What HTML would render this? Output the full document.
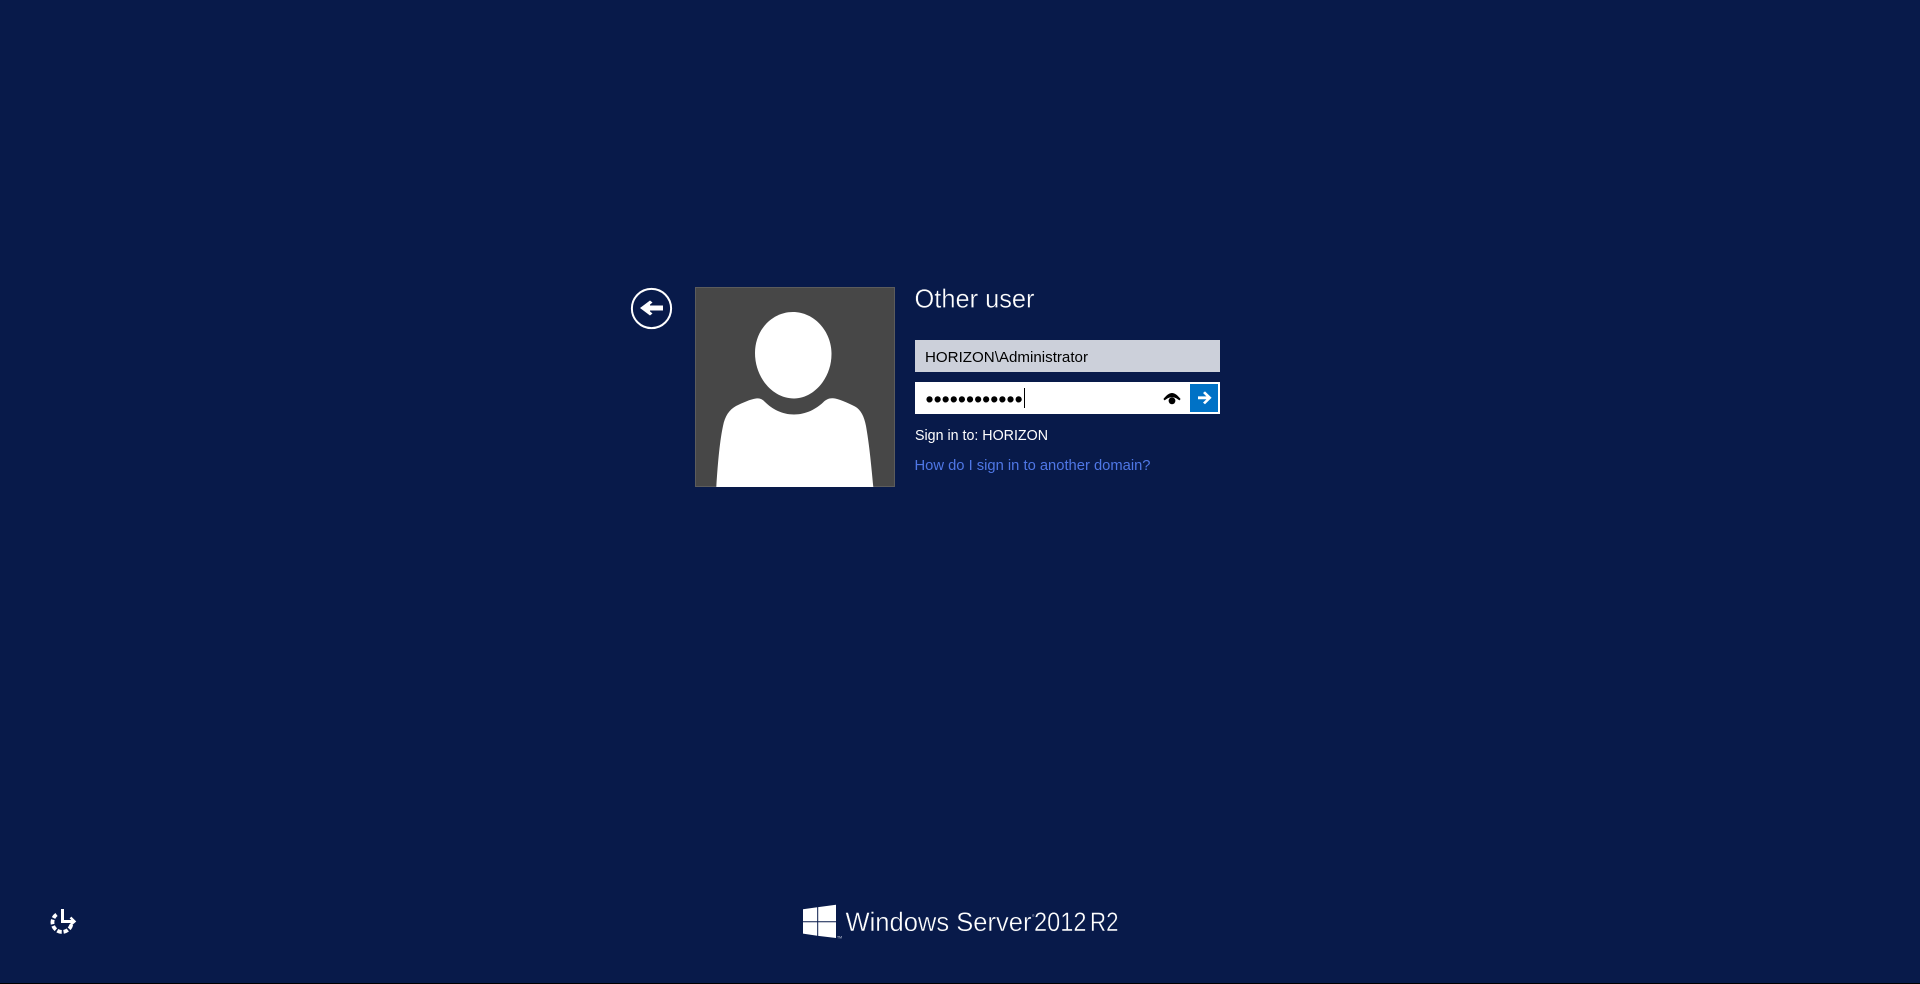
<!DOCTYPE html>
<html lang="en">
<head>
<meta charset="utf-8">
<title>Other user</title>
<style>
html,body{margin:0;padding:0;width:1920px;height:984px;overflow:hidden;background:#081a4a}
svg{display:block;position:absolute;left:0;top:0}
text{font-family:"Liberation Sans",sans-serif;white-space:pre}
</style>
</head>
<body>
<svg width="1920" height="984" viewBox="0 0 1920 984" xmlns="http://www.w3.org/2000/svg">
<rect width="1920" height="984" fill="#081a4a"/>
<rect y="983" width="1920" height="1" fill="#000"/>

<!-- back button -->
<circle cx="651.5" cy="308.5" r="19.6" fill="none" stroke="#fff" stroke-width="2"/>
<path d="M663 308 H644" fill="none" stroke="#fff" stroke-width="5"/>
<path d="M640 308 L650 300.5 L652.5 302.5 L646 308 L652.5 313.5 L650 315.5 Z" fill="#fff"/>
<path d="M644 308 L650 303 V313 Z" fill="#fff"/>

<!-- avatar -->
<rect x="695.5" y="287.5" width="199" height="199" fill="#474747" stroke="#5c5c5c" stroke-width="1"/>
<path d="M793 312 C814 312 831.5 331 831.5 354 C831.5 379 813 398.5 794 398.5 C773 398.5 755 378 755 353 C755 330 772 312 793 312 Z" fill="#fff"/>
<path d="M716.3 487 C718 460 720 440 723 426 C725 416 729 410 736 406 C742 403 751 399 756 398.5 C760 398 762 399 765 402 C772 409 782 414.5 794 414.5 C806 414.5 816 409 823 402.5 C826 399.5 829 398 833 398.3 C838 398.6 848 403 855 406.5 C861 410 864 416 866 426 C869 443 871 462 873.3 487 Z" fill="#fff"/>

<!-- title -->
<text x="914.5" y="307.5" font-size="26" fill="#ffffff" stroke="#081a4a" stroke-width="0.35" textLength="120" lengthAdjust="spacingAndGlyphs">Other user</text>

<!-- username -->
<rect x="915" y="340" width="305" height="32" fill="#ccd0da"/>
<text x="925" y="362" font-size="15" fill="#000" textLength="163" lengthAdjust="spacingAndGlyphs">HORIZON\Administrator</text>

<!-- password -->
<rect x="915" y="382" width="305" height="32" fill="#fff"/>
<text y="406.8" font-size="23" fill="#000" text-anchor="middle" x="929.5 937.6 945.7 953.8 961.9 970 978.1 986.2 994.3 1002.4 1010.5 1018.7">••••••••••••</text>
<rect x="1024" y="388" width="1" height="20" fill="#000"/>

<!-- reveal eye -->
<path d="M1163.4 399 C1167 394.6 1169.5 393 1172 393 C1174.5 393 1177 394.6 1180.6 399 L1179.4 400.4 C1176.5 398 1174.5 397.2 1172 397.2 C1169.5 397.2 1167.5 398 1164.6 400.4 Z" fill="#000"/>
<circle cx="1172" cy="400.8" r="3.4" fill="#000"/>

<!-- submit -->
<rect x="1190" y="384" width="28" height="28" fill="#0072c6"/>
<path d="M1198 396.4 H1206.4 L1203 393 L1205 391.4 L1211.6 397.8 L1205 404.2 L1203 402.6 L1206.4 399.2 H1198 Z" fill="#fff"/>

<!-- sign in info -->
<text x="915" y="440" font-size="15" fill="#fff" textLength="133" lengthAdjust="spacingAndGlyphs">Sign in to: HORIZON</text>
<text x="914.5" y="470" font-size="15" fill="#4f77e6" textLength="236" lengthAdjust="spacingAndGlyphs">How do I sign in to another domain?</text>

<!-- ease of access -->
<g fill="none" stroke="#fff">
<path d="M56.5 914.5 A9.6 9.6 0 1 0 71.5 924" stroke-width="3.8" stroke-dasharray="4.6 1.8"/>
<path d="M62.5 909 V921.5 H73" stroke-width="3"/>
<path d="M70.5 917.5 L74.5 921.5 L70.5 925" stroke-width="2.4"/>
</g>

<!-- windows logo -->
<g fill="#fff">
<path d="M803 909.3 L817.2 907.3 V921.2 H803 Z"/>
<path d="M818.2 907.1 L836 904.8 V921.2 H818.2 Z"/>
<path d="M803 922.2 H817.2 V935.7 L803 933.6 Z"/>
<path d="M818.2 922.2 H836 V938 L818.2 935.9 Z"/>
</g>
<text x="837" y="938.5" font-size="3.5" fill="#cfd4e0">TM</text>
<text x="845.5" y="931" font-size="27" fill="#ffffff" stroke="#081a4a" stroke-width="0.4" textLength="186" lengthAdjust="spacingAndGlyphs">Windows Server</text>
<text x="1032" y="917" font-size="3.5" fill="#b8bfd0">®</text>
<text x="1034" y="931" font-size="27" fill="#ffffff" stroke="#081a4a" stroke-width="0.4" textLength="52.5" lengthAdjust="spacingAndGlyphs">2012</text>
<text x="1090" y="931" font-size="27" fill="#ffffff" stroke="#081a4a" stroke-width="0.4" textLength="28.5" lengthAdjust="spacingAndGlyphs">R2</text>
</svg>
</body>
</html>
